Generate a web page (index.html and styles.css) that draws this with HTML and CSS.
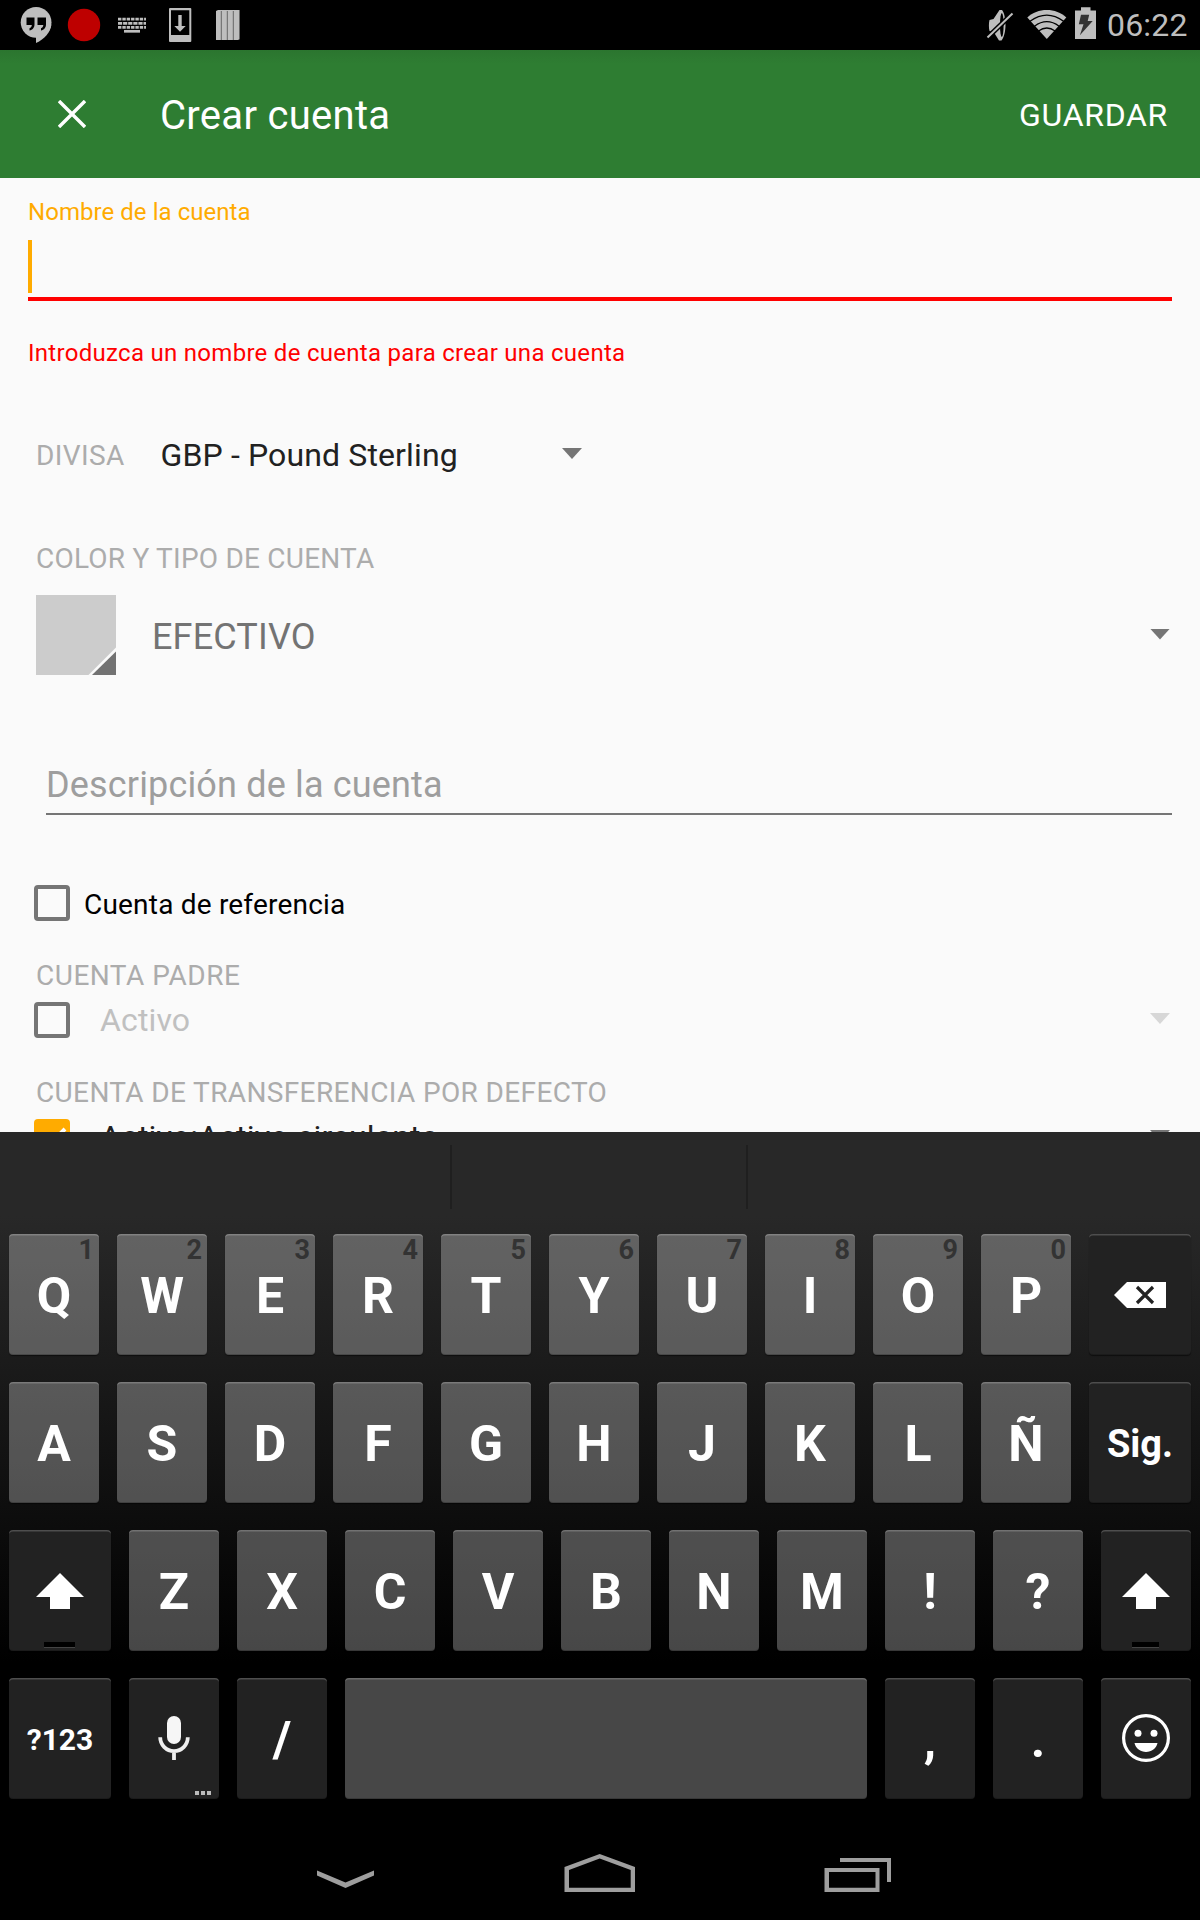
FILE: index.html
```html
<!DOCTYPE html>
<html lang="es">
<head>
<meta charset="utf-8">
<title>Crear cuenta</title>
<link rel="stylesheet" href="styles.css">
</head>
<body>
<div class="screen">
  <header class="status">
    <div class="status-left">
      <svg width="36" height="50" viewBox="18 0 36 50"><circle cx="36.100" cy="22.300" r="15.400" fill="#bebebe"/><path fill="#bebebe" d="M36 34v9c8.500-4 14.500-10.500 15.400-18.500z"/><path fill="#000" d="M26.500 17.500h8v7c0 3-2 5.500-5 6v-2.300c1.500-.5 2.300-1.700 2.300-3.200h-5.300zM37.500 17.500h8.500v7c0 3-2 5.500-5 6v-2.300c1.500-.5 2.300-1.700 2.300-3.200h-5.800z"/></svg>
      <svg width="36" height="50" viewBox="66 0 36 50"><circle cx="84" cy="25" r="16.200" fill="#be0000"/></svg>
      <svg width="36" height="50" viewBox="114 0 36 50"><g stroke="#bebebe" stroke-width="2.700" fill="none"><path stroke-dasharray="3.400 .95" d="M118 19.200h28"/><path stroke-dasharray="4.200 .9" d="M118 23.400h28"/><path stroke-dasharray="3.400 .95" d="M118 27.400h28"/><path d="M124 31.300h16"/></g></svg>
      <svg width="36" height="50" viewBox="162 0 36 50"><path fill="#bebebe" fill-rule="evenodd" d="M170 8h20.300a1 1 0 0 1 1 1v32a1 1 0 0 1-1 1H170a1 1 0 0 1-1-1V9a1 1 0 0 1 1-1zm1 2.300V35h18.300V10.300z"/><path fill="#bebebe" d="M178.300 15h3.400v11h4l-5.700 5.700-5.700-5.700h4z"/></svg>
      <svg width="36" height="50" viewBox="210 0 36 50"><path fill="#bebebe" d="M216 11l2-1h22v29l-2 1h-22z"/><path stroke="#666" d="M221.300 11v29M227.300 11v29M233.300 11v29M239.500 10v29"/></svg>
    </div>
    <div class="status-right">
      <svg width="32" height="50" viewBox="984 0 32 50"><path fill="#bebebe" d="M989.500 20l4-1 6-9h2.500c2.500 3 3.500 9 3.500 15s-1.500 13-4 15.500h-2.500l-5-8-4.500-1.500c-.8-3-.8-8 0-11z"/><ellipse cx="1001.800" cy="25" rx="1.800" ry="12" fill="#000"/><path stroke="#000" stroke-width="5" d="M987.500 37.500l25-24"/><path stroke="#bebebe" stroke-width="2" d="M987.500 37.500l25-24"/></svg>
      <svg class="wifi" width="41" height="50" viewBox="1026 0 41 50"><path fill="#bebebe" d="M1027.300 17.500c10-10 29-10 39 0L1046.800 39z"/><g fill="none" stroke="#000" stroke-width="1.300"><path d="M1030 21.300q16.800-12.500 33.600 0M1034.500 26.200q12.300-9 24.600 0M1038.500 31q8.300-6 16.600 0"/></g></svg>
      <svg class="battery" width="27" height="50" viewBox="1072 0 27 50"><path fill="#bebebe" d="M1075 10.500h6V7.300h9.500v3.200h5.500V39h-21z"/><path fill="#333" d="M1081 14.700h8.200l-1.500 6.300h5l-12.800 14.200 3.600-11h-4.700z"/></svg>
      <span class="clock">06:22</span>
    </div>
  </header>

  <div class="appbar">
    <svg class="close" width="28" height="28" viewBox="0 0 28 28"><path d="M1 1l26 26M27 1L1 27" stroke="#fff" stroke-width="3.400"/></svg>
    <h1 class="title">Crear cuenta</h1>
    <button class="save">GUARDAR</button>
  </div>

  <main class="form">
    <label class="floating">Nombre de la cuenta</label>
    <div class="name-input"><span class="caret"></span></div>
    <p class="error">Introduzca un nombre de cuenta para crear una cuenta</p>

    <div class="currency">
      <span class="caption">DIVISA</span>
      <span class="value">GBP - Pound Sterling</span>
      <span class="arrow"></span>
    </div>

    <div class="caption type-caption">COLOR Y TIPO DE CUENTA</div>
    <div class="type-row">
      <svg class="swatch" width="80" height="80" viewBox="0 0 80 80"><path fill="#ccc" d="M0 0h80v80H0z"/><path fill="#fafafa" d="M80 52.500V80H52.500z"/><path fill="#727272" d="M80 56.500V80H56z"/></svg>
      <span class="type">EFECTIVO</span>
      <span class="arrow"></span>
    </div>

    <div class="description">Descripción de la cuenta</div>

    <div class="check-row reference"><span class="box"></span><span class="check-label">Cuenta de referencia</span></div>

    <div class="caption parent-caption">CUENTA PADRE</div>
    <div class="check-row disabled"><span class="box"></span><span class="value">Activo</span><span class="arrow"></span></div>

    <div class="caption transfer-caption">CUENTA DE TRANSFERENCIA POR DEFECTO</div>
    <div class="check-row transfer"><span class="box checked"><svg width="36" height="36" viewBox="0 0 36 36"><path d="M6 18l8.500 8.500L31 10" fill="none" stroke="#fff" stroke-width="4"/></svg></span><span class="value">Activo:Activo circulante</span><span class="arrow"></span></div>
  </main>

  <section class="keyboard">
    <div class="suggestions"><span></span><span></span><span></span></div>
    <div class="row">
      <div class="key"><sup>1</sup>Q</div><div class="key"><sup>2</sup>W</div><div class="key"><sup>3</sup>E</div><div class="key"><sup>4</sup>R</div><div class="key"><sup>5</sup>T</div><div class="key"><sup>6</sup>Y</div><div class="key"><sup>7</sup>U</div><div class="key"><sup>8</sup>I</div><div class="key"><sup>9</sup>O</div><div class="key"><sup>0</sup>P</div>
      <div class="key dark wide icon"><svg width="52" height="26" viewBox="0 0 52 26"><path fill="#fff" d="M0 13L13 0h39v26H13z"/><path stroke="#222" stroke-width="3.200" d="M23 5l16 16M39 5L23 21"/></svg></div>
    </div>
    <div class="row">
      <div class="key">A</div><div class="key">S</div><div class="key">D</div><div class="key">F</div><div class="key">G</div><div class="key">H</div><div class="key">J</div><div class="key">K</div><div class="key">L</div><div class="key">Ñ</div>
      <div class="key dark wide next">Sig.</div>
    </div>
    <div class="row">
      <div class="key dark wide shift"><svg width="48" height="36" viewBox="0 0 48 36"><path fill="#fff" d="M24 0l24 24H34v12H14V24H0z"/></svg><i></i></div>
      <div class="key">Z</div><div class="key">X</div><div class="key">C</div><div class="key">V</div><div class="key">B</div><div class="key">N</div><div class="key">M</div><div class="key">!</div><div class="key">?</div>
      <div class="key dark shift right"><svg width="48" height="36" viewBox="0 0 48 36"><path fill="#fff" d="M24 0l24 24H34v12H14V24H0z"/></svg><i></i></div>
    </div>
    <div class="row">
      <div class="key dark wide symbols">?123</div>
      <div class="key dark icon low mic"><svg width="32" height="44" viewBox="0 0 32 44"><rect x="9" y="0" width="14" height="28" rx="7" fill="#f6f6f6"/><path d="M2.200 21.300a13.700 13.700 0 0 0 27.600 0M16 35v9" fill="none" stroke="#eee" stroke-width="3.800"/></svg><svg class="dots" width="16" height="4" viewBox="0 0 16 4"><path fill="#bbb" d="M0 0h4v4H0zM6 0h4v4H6zM12 0h4v4h-4z"/></svg></div>
      <div class="key dark">/</div>
      <div class="key space"></div>
      <div class="key dark">,</div>
      <div class="key dark">.</div>
      <div class="key dark icon low"><svg width="48" height="48" viewBox="0 0 48 48"><circle cx="24" cy="24" r="22.400" fill="none" stroke="#fff" stroke-width="3.200"/><circle cx="16" cy="19.300" r="3.500" fill="#fff"/><circle cx="32" cy="19.300" r="3.500" fill="#fff"/><path fill="#fff" d="M12.500 29h23c-1.200 5.500-6 9-11.500 9s-10.300-3.500-11.500-9z"/></svg></div>
    </div>
  </section>

  <nav class="navbar">
    <svg width="640" height="100" viewBox="280 1820 640 100"><g fill="#9e9e9e"><path d="M317 1870.500l28.500 12 28.500-12v5l-28.500 12.500-28.500-12.500z"/><path fill-rule="evenodd" d="M564.500 1867l35.200-13 35.300 13v25h-70.500zm4.500 3v17.800h61.700V1870l-31-11.500z"/><path fill-rule="evenodd" d="M824.500 1868h55v24h-55zm4.500 4v15.800h46.500V1872zM840 1858h51v24h-4v-20h-47z"/></g></svg>
  </nav>
</div>
</body>
</html>
```
FILE: styles.css
```css
* { box-sizing: border-box; }
body { margin: 0; background: #000; }
svg { display: block; flex: none; }

.screen {
  width: 1200px;
  height: 1920px;
  display: flex;
  flex-direction: column;
  overflow: hidden;
  font-family: Roboto, "Noto Sans", sans-serif;
}

/* Status bar */
.status {
  height: 50px;
  flex: none;
  background: #000;
  display: flex;
  justify-content: space-between;
  padding: 0 12px 0 18px;
}
.status-left { display: flex; gap: 12px; }
.status-right { display: flex; }
.wifi { margin-left: 10px; }
.battery { margin-left: 5px; }
.clock {
  width: 81px;
  margin-left: 8px;
  font-size: 32px;
  line-height: 51px;
  letter-spacing: .2px;
  color: #bebebe;
}

/* App bar */
.appbar {
  height: 128px;
  flex: none;
  display: flex;
  align-items: center;
  padding: 0 32px 0 58px;
  background: linear-gradient(#2b752f, #2e7d32 14px);
  color: #fff;
}
.title {
  margin: 3px 0 0 74px;
  font-size: 40px;
  line-height: 48px;
  font-weight: 400;
  letter-spacing: .3px;
}
.save {
  margin: 1px 0 0 auto;
  padding: 0;
  border: 0;
  background: none;
  color: inherit;
  font: 32px/40px Roboto, sans-serif;
  letter-spacing: .7px;
}

/* Form */
.form {
  height: 954px;
  flex: none;
  overflow: hidden;
  padding: 18px 28px 0;
  background: #fafafa;
  color: #212121;
}
.floating, .error {
  display: block;
  margin: 0;
  font-size: 24px;
  line-height: 32px;
  letter-spacing: .05px;
  color: #ffab00;
}
.name-input {
  height: 61px;
  margin-top: 12px;
  border-bottom: 4px solid #f00;
}
.caret { display: block; width: 4px; height: 53px; background: #ffab00; }
.error { margin-top: 36px; letter-spacing: .29px; color: #f00; }

.caption {
  padding: 1px 0 0 8px;
  font-size: 28px;
  line-height: 32px;
  letter-spacing: .37px;
  color: #acacac;
}
.value { font-size: 32px; line-height: 40px; letter-spacing: .13px; }
.arrow {
  width: 20px;
  height: 11px;
  flex: none;
  margin: 0 2px 3px auto;
  background: #757575;
  clip-path: polygon(0 0, 100% 0, 50% 100%);
}

.currency {
  width: 556px;
  height: 48px;
  margin-top: 62px;
  display: flex;
  align-items: center;
}
.currency .value { margin-left: 36px; }
.type-caption { margin-top: 63px; letter-spacing: .22px; }
.type-row {
  height: 80px;
  margin: 20px 0 0 8px;
  display: flex;
  align-items: center;
}
.type-row .arrow { margin-bottom: 2px; }
.type { margin: 3px 0 0 36px; font-size: 36px; line-height: 44px; letter-spacing: .15px; color: #737373; }
.description {
  height: 50px;
  margin: 90px 0 0 18px;
  border-bottom: 2px solid #757575;
  font-size: 36px;
  line-height: 40px;
  letter-spacing: .16px;
  color: #9e9e9e;
}
.check-row {
  height: 36px;
  margin: 10px 0 0 6px;
  display: flex;
  align-items: center;
}
.reference { margin-top: 70px; }
.box { width: 36px; height: 36px; flex: none; border: 4px solid #757575; border-radius: 4px; }
.box.checked { border: 0; background: #ffab00; }
.check-label { margin: 4px 0 0 14px; font-size: 28px; line-height: 32px; letter-spacing: .2px; color: #000; }
.check-row .value { margin-left: 30px; }
.transfer .value { letter-spacing: .15px; }
.disabled .value { color: #c0c0c0; }
.disabled .arrow { background: #d7d7d7; }
.parent-caption, .transfer-caption { margin-top: 38px; }
.parent-caption { letter-spacing: .5px; }

/* Keyboard */
.keyboard {
  height: 688px;
  flex: none;
  padding: 0 9px;
  display: flex;
  flex-direction: column;
  gap: 27px;
  background: linear-gradient(#282828 84px, #000 530px);
}
.suggestions { height: 75px; display: flex; padding-top: 13px; }
.suggestions span { height: 64px; width: 296px; border-right: 2px solid #1f1f1f; }
.suggestions span:first-child { width: 443px; }
.suggestions span:last-child { border: 0; }
.row { display: flex; gap: 18px; height: 121px; flex: none; }
.key {
  position: relative;
  width: 90px;
  flex: none;
  display: flex;
  align-items: center;
  justify-content: center;
  border-radius: 4px;
  background: rgba(255, 255, 255, .28);
  box-shadow: inset 0 2px 0 -.5px rgba(255, 255, 255, .2), inset 0 -1px 0 rgba(0, 0, 0, .2), 0 1px 1px rgba(0, 0, 0, .5);
  color: #fff;
  font-size: 50px;
  font-weight: 700;
  line-height: 60px;
  padding-top: 3px;
}
.key sup {
  position: absolute;
  top: 0;
  right: 5px;
  font-size: 27px;
  line-height: 32px;
  color: #333;
}
.dark { background: #222; }
.wide { width: 102px; }
.space { width: 522px; }
.next { font-size: 38px; }
.symbols { font-size: 30px; }
.shift, .icon { padding-top: 0; }
.low { padding-bottom: 2px; }
.shift i {
  position: absolute;
  bottom: 3px;
  left: 35px;
  width: 31px;
  height: 6px;
  background: #000;
  border-bottom: 1px solid #444;
}
.shift.right i { left: 31px; width: 27px; }
.mic .dots { position: absolute; right: 8px; bottom: 4px; }

.navbar { height: 100px; flex: none; display: flex; justify-content: center; background: #000; }
```
